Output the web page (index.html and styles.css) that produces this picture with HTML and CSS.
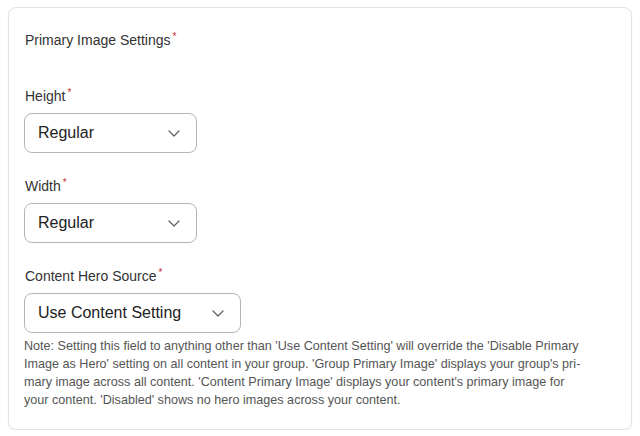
FILE: index.html
```html
<!DOCTYPE html>
<html lang="en">
<head>
<meta charset="utf-8">
<title>Primary Image Settings</title>
<link rel="stylesheet" href="styles.css">
</head>
<body>
<section class="card">
  <div class="title">Primary Image Settings<span class="req">*</span></div>

  <div class="field">
    <label class="label">Height<span class="req">*</span></label>
    <div class="select sel-short">
      <span class="value">Regular</span>
      <svg class="chev" width="12" height="7" viewBox="0 0 12 7"><path d="M1 1l5 5 5-5" fill="none" stroke="#5f5f5f" stroke-width="1.2" stroke-linecap="round" stroke-linejoin="round"/></svg>
    </div>
  </div>

  <div class="field">
    <label class="label">Width<span class="req">*</span></label>
    <div class="select sel-short">
      <span class="value">Regular</span>
      <svg class="chev" width="12" height="7" viewBox="0 0 12 7"><path d="M1 1l5 5 5-5" fill="none" stroke="#5f5f5f" stroke-width="1.2" stroke-linecap="round" stroke-linejoin="round"/></svg>
    </div>
  </div>

  <div class="field">
    <label class="label">Content Hero Source<span class="req">*</span></label>
    <div class="select sel-long">
      <span class="value">Use Content Setting</span>
      <svg class="chev" width="12" height="7" viewBox="0 0 12 7"><path d="M1 1l5 5 5-5" fill="none" stroke="#5f5f5f" stroke-width="1.2" stroke-linecap="round" stroke-linejoin="round"/></svg>
    </div>
    <p class="note">Note: Setting this field to anything other than 'Use Content Setting' will override the 'Disable Primary Image as Hero' setting on all content in your group. 'Group Primary Image' displays your group's pri&shy;mary image across all content. 'Content Primary Image' displays your content's primary image for your content. 'Disabled' shows no hero images across your content.</p>
  </div>
</section>
</body>
</html>
```

FILE: styles.css
```css
html, body {
  margin: 0;
  padding: 0;
  background: #ffffff;
}
body {
  padding: 7px 8px 0 8px;
  font-family: "Liberation Sans", Arial, sans-serif;
  color: #333333;
}
.card {
  width: 624px;
  box-sizing: border-box;
  border: 1px solid #e2e2e2;
  border-radius: 8px;
  box-shadow: 0 1px 2px rgba(0, 0, 0, 0.06);
  padding: 23px 15px 20px 15px;
}
.title {
  font-size: 14px;
  line-height: 18px;
  color: #333333;
  margin-bottom: 38px;
  padding-left: 1px;
}
.req {
  color: #c9302c;
  font-size: 10px;
  vertical-align: top;
  position: relative;
  top: -3px;
  margin-left: 2px;
}
.field {
  display: flex;
  flex-direction: column;
  align-items: flex-start;
  margin-bottom: 24px;
}
.field:last-child {
  margin-bottom: 0;
}
.label {
  font-size: 14px;
  line-height: 18px;
  color: #333333;
  margin-bottom: 8px;
  padding-left: 1px;
}
.select {
  box-sizing: border-box;
  height: 40px;
  border: 1px solid #b5b5b5;
  border-radius: 8px;
  display: flex;
  align-items: center;
  justify-content: space-between;
  padding: 0 16px 0 13px;
  font-size: 16px;
  color: #222222;
}
.sel-short {
  width: 173px;
}
.sel-long {
  width: 217px;
}
.chev {
  display: block;
  margin-top: 1px;
}
.note {
  margin: 4px 0 0 0;
  font-size: 12.6px;
  line-height: 18px;
  color: #555555;
  max-width: 566px;
}
```
